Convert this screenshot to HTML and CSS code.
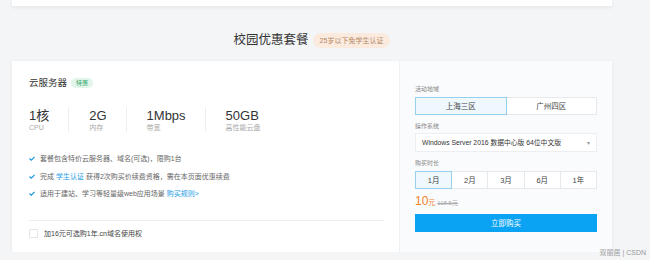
FILE: index.html
```html
<!DOCTYPE html>
<html lang="zh-CN">
<head>
  <meta charset="UTF-8">
  <meta name="viewport" content="width=device-width, initial-scale=1.0">
  <title>校园优惠套餐</title>
  <link rel="stylesheet" href="styles.css">
</head>
<body>
  <div class="wrap">
    <div class="prev-card"></div>
    <h2 class="section-title">校园优惠套餐 <span class="tag">25岁以下免学生认证</span></h2>
    <section class="package">
      <div class="package-info">
        <div class="package-name">云服务器 <span class="hot">特惠</span></div>
        <ul class="specs">
          <li><b>1核</b><span>CPU</span></li>
          <li><b>2G</b><span>内存</span></li>
          <li><b>1Mbps</b><span>带宽</span></li>
          <li><b>50GB</b><span>高性能云盘</span></li>
        </ul>
        <ul class="features">
          <li><svg viewBox="0 0 6 5"><path d="M0.5 2.5 L2.3 4.2 L5.6 0.8" /></svg>套餐包含特价云服务器、域名(可选)，限购1台</li>
          <li><svg viewBox="0 0 6 5"><path d="M0.5 2.5 L2.3 4.2 L5.6 0.8" /></svg>完成 <a href="#">学生认证</a> 获得2次购买价续费资格，需在本页面优惠续费</li>
          <li><svg viewBox="0 0 6 5"><path d="M0.5 2.5 L2.3 4.2 L5.6 0.8" /></svg>适用于建站、学习等轻量级web应用场景 <a href="#">购买规则&gt;</a></li>
        </ul>
        <label class="addon"><span class="checkbox"></span>加16元可选购1年.cn域名使用权</label>
      </div>
      <div class="package-buy">
        <div class="field-label">活动地域</div>
        <div class="tabs">
          <button class="on">上海三区</button>
          <button>广州四区</button>
        </div>
        <div class="field-label gap">操作系统</div>
        <div class="select">
          <span>Windows Server 2016 数据中心版 64位中文版</span>
          <span class="arrow">▾</span>
        </div>
        <div class="field-label gap">购买时长</div>
        <div class="tabs">
          <button class="on">1月</button>
          <button>2月</button>
          <button>3月</button>
          <button>6月</button>
          <button>1年</button>
        </div>
        <div class="price"><b>10</b>元 <s>118.5元</s></div>
        <button class="buy">立即购买</button>
      </div>
    </section>
  </div>
  <div class="watermark">双丽居 | CSDN</div>
</body>
</html>
```

FILE: styles.css
```css
body {
  margin: 0;
  background-color: #f4f5f7;
  font-family: "Liberation Sans", "Noto Sans CJK SC", sans-serif;
  color: #666;
}
.wrap {
  width: 600px;
  margin-left: 12px;
}
.prev-card {
  height: 6px;
  background-color: #fff;
  box-shadow: 0 1px 4px rgba(0, 0, 0, 0.08);
}
.section-title {
  display: flex;
  justify-content: center;
  align-items: center;
  gap: 4px;
  margin: 26px 0 13px;
  font-size: 12.5px;
  font-weight: normal;
  line-height: 16px;
  color: #333;
}
.tag {
  padding: 0 7px;
  font-size: 7px;
  line-height: 15px;
  color: #b48663;
  background-color: #fbebdf;
  border-radius: 8px;
}
.package {
  display: flex;
  background-color: #fff;
  box-shadow: 0 1px 3px rgba(0, 0, 0, 0.08);
}
.package-info {
  flex: 1;
  padding: 14px 15px 13px 17px;
}
.package-name {
  display: flex;
  align-items: center;
  gap: 4px;
  font-size: 9.5px;
  line-height: 15px;
  color: #333;
}
.hot {
  padding: 0 5px;
  font-size: 6px;
  line-height: 10px;
  color: #2fa56a;
  background-color: #e2f5eb;
  border-radius: 5px;
}
.specs {
  display: flex;
  margin: 17px 0 0;
  padding: 0;
  list-style: none;
}
.specs li {
  display: flex;
  flex-direction: column;
  padding: 1px 19px 0 20px;
  border-left: 1px solid #eceef1;
}
.specs li:first-child {
  padding-left: 0;
  border-left: 0;
}
.specs b {
  font-size: 13px;
  font-weight: normal;
  line-height: 15px;
  color: #333;
}
.specs span {
  font-size: 7px;
  line-height: 9px;
  color: #aaa;
}
.features {
  margin: 18px 0 0;
  padding: 0;
  list-style: none;
}
.features li {
  display: flex;
  align-items: center;
  font-size: 7px;
  line-height: 17.5px;
  color: #666;
  white-space: pre;
}
.features svg {
  width: 6px;
  height: 5px;
  margin-right: 5px;
  fill: none;
  stroke: #1a9be6;
  stroke-width: 1.2;
}
.features a {
  color: #1a9be6;
  text-decoration: none;
}
.addon {
  display: flex;
  align-items: center;
  gap: 6px;
  margin-top: 17px;
  padding-top: 8px;
  border-top: 1px solid #eceef1;
  font-size: 7px;
  line-height: 10px;
  color: #444;
}
.checkbox {
  width: 7px;
  height: 7px;
  border: 1px solid #e3e5e8;
  border-radius: 1px;
  background-color: #fff;
}
.package-buy {
  width: 182px;
  padding: 23.5px 15px 0;
  background-color: #fafbfc;
  border-left: 1px solid #eef0f3;
}
.field-label {
  font-size: 6px;
  line-height: 8px;
  color: #888;
}
.field-label.gap {
  margin-top: 7px;
}
.tabs {
  display: flex;
  margin-top: 4px;
}
.tabs button {
  flex: 1;
  height: 18px;
  margin-left: -1px;
  padding: 0;
  border: 1px solid #e6e8eb;
  background-color: #fff;
  font-family: inherit;
  font-size: 7.5px;
  color: #444;
}
.tabs button:first-child {
  margin-left: 0;
}
.tabs .on {
  position: relative;
  border-color: #96d0ee;
  background-color: #eef8fd;
}
.select {
  display: flex;
  justify-content: space-between;
  align-items: center;
  height: 17px;
  margin-top: 3px;
  padding: 0 6px;
  border: 1px solid #eceef1;
  background-color: #fff;
  font-size: 6.8px;
  color: #333;
}
.select .arrow {
  font-size: 6px;
  color: #999;
}
.field-label.gap + .tabs {
  margin-top: 4px;
}
.price {
  margin-top: 5.5px;
  font-size: 7px;
  line-height: 14px;
  color: #f08128;
}
.price b {
  font-size: 12px;
  font-weight: normal;
}
.price s {
  font-size: 6px;
  color: #aaa;
}
.buy {
  display: block;
  width: 100%;
  height: 18px;
  margin-top: 3.5px;
  border: none;
  background-color: #0aa3f4;
  font-family: inherit;
  font-size: 7.5px;
  color: #fff;
}
.watermark {
  position: absolute;
  right: 4px;
  top: 248px;
  font-size: 7px;
  line-height: 10px;
  color: #999;
}
```
